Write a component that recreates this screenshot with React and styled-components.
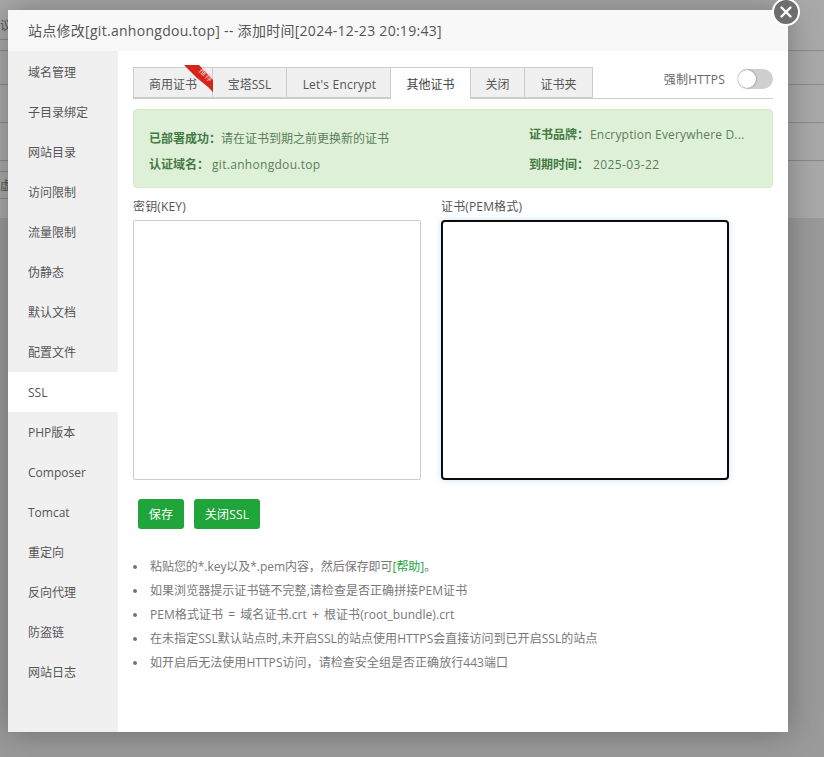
import React from 'react';
import styled, { createGlobalStyle } from 'styled-components';

const FONT = `"Open Sans", "Noto Sans CJK SC", sans-serif`;

const GlobalStyle = createGlobalStyle`
    html, body {
        margin: 0;
        padding: 0;
        height: 100%;
        overflow: hidden;
        font-family: ${FONT};
    }
    #root {
        height: 100%;
    }
`;

const Page = styled.div`
    position: relative;
    width: 824px;
    height: 757px;
    overflow: hidden;
    background: #9a9a9a;
`;

const BackdropPanel = styled.div`
    height: 218px;
    background: #a9a9a9;
    padding-top: 11px;
    box-sizing: border-box;
`;

const BackdropRow = styled.div`
    height: ${props => props.height}px;
    width: ${props => (props.short ? '100px' : 'auto')};
    border-bottom: 1px solid #8a8a8a;
    box-sizing: border-box;
    font-size: 12px;
    color: #555;
    line-height: ${props => props.height}px;
    white-space: nowrap;
`;

const Modal = styled.div`
    position: absolute;
    left: 8px;
    top: 10px;
    width: 780px;
    height: 722px;
    background: #fff;
    box-shadow: 0 0 30px rgba(0, 0, 0, .3);
    display: flex;
    flex-direction: column;
`;

const CloseButton = styled.button`
    position: absolute;
    right: -12px;
    top: -12px;
    width: 28px;
    height: 28px;
    padding: 0;
    border: 2px solid #fff;
    border-radius: 50%;
    background: #6e6e6e;
    box-sizing: border-box;
    display: flex;
    align-items: center;
    justify-content: center;
`;

const Header = styled.div`
    height: 41px;
    line-height: 42px;
    padding-left: 20px;
    font-size: 14px;
    letter-spacing: .28px;
    color: #555;
    background: #f8f8f8;
    flex: none;
`;

const Body = styled.div`
    flex: 1;
    display: flex;
    min-height: 0;
`;

const Sidebar = styled.div`
    width: 110px;
    flex: none;
    background: #f0f0f1;
    padding-top: 1px;
`;

const SideItem = styled.div`
    height: 40px;
    line-height: 42px;
    padding-left: 20px;
    font-size: 12px;
    color: #555;
    background: ${props => (props.active ? '#fff' : 'transparent')};
`;

const Content = styled.div`
    flex: 1;
    padding: 16px 15px 0;
    min-width: 0;
`;

const TabBar = styled.div`
    display: flex;
    height: 32px;
    box-sizing: border-box;
    border-bottom: 1px solid #ccc;
`;

const Tab = styled.div`
    position: relative;
    width: ${props => props.width}px;
    height: ${props => (props.active ? 32 : 31)}px;
    box-sizing: border-box;
    line-height: 34px;
    text-align: center;
    font-size: 12px;
    letter-spacing: ${props => (props.latin ? '.2px' : 0)};
    text-indent: ${props => (props.latin ? '2px' : 0)};
    color: ${props => (props.active ? '#444' : '#555')};
    background: ${props => (props.active ? '#fff' : '#f0f0f0')};
    border: 1px solid #ccc;
    border-left: ${props => (props.first ? '1px solid #ccc' : 'none')};
    border-bottom: ${props => (props.active ? 'none' : '1px solid #ccc')};
`;

const Ribbon = styled.svg`
    position: absolute;
    left: 50px;
    top: -3px;
`;

const ForceHttps = styled.div`
    margin-left: auto;
    height: 20px;
    margin-top: 2px;
    display: flex;
    align-items: center;
    gap: 13px;
    font-size: 12px;
    letter-spacing: .2px;
    color: #666;
`;

const Switch = styled.div`
    position: relative;
    width: 35px;
    height: 20px;
    border-radius: 10px;
    background: #cfcfcf;
`;

const SwitchKnob = styled.div`
    position: absolute;
    left: 0;
    top: 1px;
    width: 18px;
    height: 18px;
    border-radius: 50%;
    background: #fff;
    box-shadow: 0 0 2px rgba(0, 0, 0, .5);
`;

const Alert = styled.div`
    margin-top: 10px;
    height: 79px;
    box-sizing: border-box;
    padding: 9px 15px;
    background: #dff0d8;
    border: 1px solid #d6e9c6;
    border-radius: 4px;
    color: #5b7f5b;
    font-size: 12px;
    display: grid;
    grid-template-columns: 380px 1fr;
    grid-template-rows: 30px 30px;
    align-items: center;
`;

const AlertCell = styled.div`
    white-space: nowrap;
    margin-top: ${props => props.drop || 0}px;
`;

const AlertLabel = styled.b`
    color: #437a44;
    font-weight: 700;
    margin-right: ${props => props.gap || 0}px;
`;

const AlertLatin = styled.span`
    letter-spacing: ${props => props.spacing}px;
`;

const Fields = styled.div`
    display: flex;
    gap: 20px;
    margin-top: 10px;
`;

const Field = styled.div`
    width: 288px;
`;

const FieldLabel = styled.div`
    height: 22px;
    line-height: 18px;
    font-size: 12px;
    letter-spacing: .15px;
    color: #555;
`;

const CertBox = styled.div`
    height: 260px;
    box-sizing: border-box;
    background: #fff;
    border-radius: ${props => (props.focused ? 4 : 2)}px;
    border: ${props => (props.focused ? '2px solid #0b0b0b' : '1px solid #ccc')};
    box-shadow: ${props => (props.focused ? '0 0 6px rgba(102, 175, 233, .35)' : 'none')};
`;

const Actions = styled.div`
    display: flex;
    gap: 10px;
    margin: 19px 0 0 5px;
`;

const SaveButton = styled.button`
    height: 30px;
    width: ${props => props.width}px;
    padding: 0;
    border: none;
    border-radius: 3px;
    background: #20a53a;
    color: #fff;
    font-family: ${FONT};
    font-size: 12px;
    letter-spacing: .2px;
`;

const Notes = styled.ul`
    list-style: none;
    margin: 26px 0 0;
    padding: 0;
`;

const Note = styled.li`
    position: relative;
    height: 24px;
    line-height: 24px;
    padding-left: 17px;
    font-size: 12px;
    letter-spacing: ${props => (props.tight ? '-.05px' : '.05px')};
    word-spacing: 2px;
    color: #777;
    white-space: nowrap;

    &::before {
        content: '';
        position: absolute;
        left: 0;
        top: 10px;
        width: 4px;
        height: 4px;
        border-radius: 50%;
        background: #777;
    }
`;

const HelpLink = styled.a`
    color: #20a53a;
`;

const sideItems = ['域名管理', '子目录绑定', '网站目录', '访问限制', '流量限制', '伪静态', '默认文档', '配置文件', 'SSL', 'PHP版本', 'Composer', 'Tomcat', '重定向', '反向代理', '防盗链', '网站日志'];

const tabs = [
    { label: '商用证书', width: 80, first: true },
    { label: '宝塔SSL', width: 74 },
    { label: "Let's Encrypt", width: 104, latin: true },
    { label: '其他证书', width: 80, active: true },
    { label: '关闭', width: 54 },
    { label: '证书夹', width: 68 },
];

const App = () => {
    return (
        <Page>
            <GlobalStyle />
            <BackdropPanel>
                <BackdropRow height={29} short>议</BackdropRow>
                <BackdropRow height={11} />
                <BackdropRow height={34} />
                <BackdropRow height={38} />
                <BackdropRow height={38} />
                <BackdropRow height={11} short />
                <BackdropRow height={27} short>虚</BackdropRow>
            </BackdropPanel>
            <Modal>
                <CloseButton aria-label="关闭">
                    <svg width="14" height="14" viewBox="0 0 14 14">
                        <path d="M2.5 2.5l9 9M11.5 2.5l-9 9" stroke="#fff" strokeWidth="2.4" strokeLinecap="round" />
                    </svg>
                </CloseButton>
                <Header>站点修改[git.anhongdou.top] -- 添加时间[2024-12-23 20:19:43]</Header>
                <Body>
                    <Sidebar>
                        {sideItems.map(item => (
                            <SideItem key={item} active={item === 'SSL'}>{item}</SideItem>
                        ))}
                    </Sidebar>
                    <Content>
                        <TabBar>
                            {tabs.map(tab => (
                                <Tab key={tab.label} width={tab.width} first={tab.first} active={tab.active} latin={tab.latin}>
                                    {tab.label}
                                    {tab.first && (
                                        <Ribbon width="34" height="36" viewBox="0 0 34 36">
                                            <path d="M0 0H15L31 17V31Q29 26 24 22L13 13Z" fill="#d8231b" />
                                            <text x="22" y="12.5" fontSize="8" textAnchor="middle" fill="#f8d0cb" transform="rotate(45 22 10)">推荐</text>
                                        </Ribbon>
                                    )}
                                </Tab>
                            ))}
                            <ForceHttps>
                                强制HTTPS
                                <Switch><SwitchKnob /></Switch>
                            </ForceHttps>
                        </TabBar>
                        <Alert>
                            <AlertCell drop={8}><AlertLabel>已部署成功：</AlertLabel>请在证书到期之前更换新的证书</AlertCell>
                            <AlertCell><AlertLabel gap={1}>证书品牌：</AlertLabel><AlertLatin spacing={0.18}>Encryption Everywhere D...</AlertLatin></AlertCell>
                            <AlertCell><AlertLabel gap={3}>认证域名：</AlertLabel><AlertLatin spacing={0.3}>git.anhongdou.top</AlertLatin></AlertCell>
                            <AlertCell><AlertLabel gap={4}>到期时间：</AlertLabel><AlertLatin spacing={0.4}>2025-03-22</AlertLatin></AlertCell>
                        </Alert>
                        <Fields>
                            <Field>
                                <FieldLabel>密钥(KEY)</FieldLabel>
                                <CertBox />
                            </Field>
                            <Field>
                                <FieldLabel>证书(PEM格式)</FieldLabel>
                                <CertBox focused />
                            </Field>
                        </Fields>
                        <Actions>
                            <SaveButton width={46}>保存</SaveButton>
                            <SaveButton width={66}>关闭SSL</SaveButton>
                        </Actions>
                        <Notes>
                            <Note tight>粘贴您的*.key以及*.pem内容，然后保存即可<HelpLink>[帮助]</HelpLink>。</Note>
                            <Note>如果浏览器提示证书链不完整,请检查是否正确拼接PEM证书</Note>
                            <Note>PEM格式证书 = 域名证书.crt + 根证书(root_bundle).crt</Note>
                            <Note>在未指定SSL默认站点时,未开启SSL的站点使用HTTPS会直接访问到已开启SSL的站点</Note>
                            <Note>如开启后无法使用HTTPS访问，请检查安全组是否正确放行443端口</Note>
                        </Notes>
                    </Content>
                </Body>
            </Modal>
        </Page>
    );
};

export default App;
